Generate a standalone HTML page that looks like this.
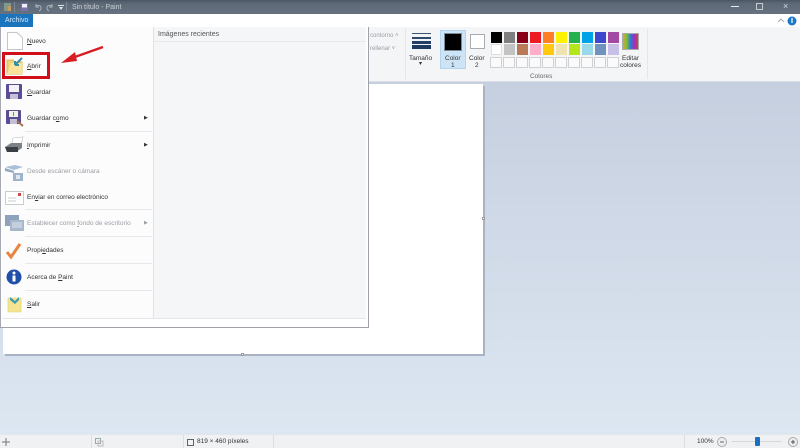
<!DOCTYPE html>
<html><head><meta charset="utf-8"><style>
html,body{margin:0;padding:0}
body{width:800px;height:448px;overflow:hidden;position:relative;background:#fff;font-family:"Liberation Sans",sans-serif;color:#333;filter:blur(.3px)}
.a{position:absolute}
.t{position:absolute;font-size:6.5px;line-height:9px;white-space:nowrap;color:#333}
.g{color:#9a9da3}
.sw{position:absolute;width:11px;height:11px;box-sizing:border-box}
.e{position:absolute;width:12px;height:11px;box-sizing:border-box;border:1px solid #cfd1d4;background:#fafafa}
.sep{position:absolute;left:25px;width:127px;height:1px;background:#e6e8ec}
svg{position:absolute;overflow:visible}
u{text-decoration:underline}
</style></head><body>
<div class="a" style="left:0;top:0;width:800px;height:14px;background:linear-gradient(#4a5563,#5d6977 25%,#66727f)"></div>
<svg style="left:4px;top:3px" width="8" height="8"><rect width="7" height="8" fill="#7f9a8c"/><rect x="4" y="3" width="3" height="5" fill="#c99a5a"/></svg>
<div class="a" style="left:14px;top:2px;width:1px;height:10px;background:#7d8894"></div>
<svg style="left:21px;top:3px" width="7" height="8"><rect width="7" height="8" fill="#7c6fb0"/><rect x="1" y="1" width="5" height="3.500" fill="#f1eff8"/></svg>
<svg style="left:34px;top:3px" width="8" height="8"><path d="M2 1V4H5M2 4C3.500 1.500 7 2 7 5C7 6.500 6 7.500 5 8" stroke="#aab3bd" fill="none"/></svg>
<svg style="left:46px;top:3px" width="8" height="8"><path d="M6 1V4H3M6 4C4.500 1.500 1 2 1 5C1 6.500 2 7.500 3 8" stroke="#aab3bd" fill="none"/></svg>
<div class="a" style="left:58px;top:5px;width:6px;height:1px;background:#e4e7ea"></div>
<svg style="left:59px;top:7px" width="4" height="3"><path d="M0 0H4L2 3Z" fill="#e4e7ea"/></svg>
<div class="a" style="left:66px;top:2px;width:1px;height:10px;background:#7d8894"></div>
<div class="t" style="left:72px;top:3px;color:#c9d0d8;font-size:7px">Sin título - Paint</div>
<div class="a" style="left:731px;top:6px;width:8px;height:1px;background:#e8ebee"></div>
<div class="a" style="left:756px;top:3px;width:7px;height:7px;border:1px solid #c4cad1;box-sizing:border-box"></div>
<div class="t" style="left:783px;top:2px;color:#d5dae0;font-size:9px">×</div>

<div class="a" style="left:0;top:14px;width:800px;height:13px;background:#fff"></div>
<div class="a" style="left:0;top:14px;width:33px;height:13px;background:#1c74bd"></div>
<div class="t" style="left:5px;top:16px;color:#d6e8f7;font-size:7px">Archivo</div>
<svg style="left:778px;top:15px" width="20" height="12"><path d="M0 7 L3 4 L6 7" stroke="#aaa" fill="none"/><circle cx="14" cy="6" r="4.500" fill="#1b78c8"/><rect x="13.400" y="3" width="1.200" height="5" fill="#fff"/></svg>

<div class="a" style="left:0;top:27px;width:800px;height:55px;background:#f4f5f7;border-bottom:1px solid #dcdfe3;box-sizing:border-box"></div>
<div class="t g" style="left:370px;top:32px;font-size:6px">contorno ˄</div>
<div class="t g" style="left:370px;top:45px;font-size:6px">rellenar ˅</div>
<div class="a" style="left:405px;top:29px;width:1px;height:50px;background:#e4e6e9"></div>
<div class="a" style="left:412px;top:33px;width:19px;height:1px;background:#3c5477"></div>
<div class="a" style="left:412px;top:37px;width:19px;height:2px;background:#2f4a70"></div>
<div class="a" style="left:412px;top:41px;width:19px;height:3px;background:#243f66"></div>
<div class="a" style="left:412px;top:45px;width:19px;height:4px;background:#1e3a60"></div>
<div class="t" style="left:409px;top:54px;font-size:6.500px">Tamaño</div>
<div class="t" style="left:419px;top:60px;font-size:6px">▾</div>
<div class="a" style="left:440px;top:30px;width:26px;height:39px;background:#cde4f7;border:1px solid #b5d3ec;box-sizing:border-box"></div>
<div class="a" style="left:444px;top:33px;width:18px;height:18px;background:#000;border:1px solid #7b8a99;box-sizing:border-box"></div>
<div class="t" style="left:445px;top:54px">Color</div><div class="t" style="left:451px;top:61px">1</div>
<div class="a" style="left:470px;top:34px;width:15px;height:15px;background:#fff;border:1px solid #a8abaf;box-sizing:border-box"></div>
<div class="t" style="left:469px;top:54px">Color</div><div class="t" style="left:475px;top:61px">2</div>

<div class="sw" style="left:491px;top:32px;background:#000"></div>
<div class="sw" style="left:504px;top:32px;background:#7f7f7f"></div>
<div class="sw" style="left:517px;top:32px;background:#880015"></div>
<div class="sw" style="left:530px;top:32px;background:#ed1c24"></div>
<div class="sw" style="left:543px;top:32px;background:#ff7f27"></div>
<div class="sw" style="left:556px;top:32px;background:#fff200"></div>
<div class="sw" style="left:569px;top:32px;background:#22b14c"></div>
<div class="sw" style="left:582px;top:32px;background:#00a2e8"></div>
<div class="sw" style="left:595px;top:32px;background:#3f48cc"></div>
<div class="sw" style="left:608px;top:32px;background:#a349a4"></div>
<div class="sw" style="left:491px;top:44px;background:#fff;border:1px solid #ddd"></div>
<div class="sw" style="left:504px;top:44px;background:#c3c3c3"></div>
<div class="sw" style="left:517px;top:44px;background:#b97a57"></div>
<div class="sw" style="left:530px;top:44px;background:#ffaec9"></div>
<div class="sw" style="left:543px;top:44px;background:#ffc90e"></div>
<div class="sw" style="left:556px;top:44px;background:#efe4b0"></div>
<div class="sw" style="left:569px;top:44px;background:#b5e61d"></div>
<div class="sw" style="left:582px;top:44px;background:#99d9ea"></div>
<div class="sw" style="left:595px;top:44px;background:#7092be"></div>
<div class="sw" style="left:608px;top:44px;background:#c8bfe7"></div>
<div class="e" style="left:490px;top:57px"></div><div class="e" style="left:503px;top:57px"></div><div class="e" style="left:516px;top:57px"></div><div class="e" style="left:529px;top:57px"></div><div class="e" style="left:542px;top:57px"></div><div class="e" style="left:555px;top:57px"></div><div class="e" style="left:568px;top:57px"></div><div class="e" style="left:581px;top:57px"></div><div class="e" style="left:594px;top:57px"></div><div class="e" style="left:607px;top:57px"></div>
<div class="t" style="left:530px;top:72px;color:#666">Colores</div>
<div class="a" style="left:622px;top:33px;width:17px;height:17px;border:1px solid #aaa;box-sizing:border-box;background:linear-gradient(90deg,#d9a53a,#7bbf3a,#2a7ad8,#a030c0,#d04040)"></div>
<div class="t" style="left:622px;top:54px">Editar</div><div class="t" style="left:620px;top:61px">colores</div>
<div class="a" style="left:647px;top:29px;width:1px;height:50px;background:#e4e6e9"></div>

<div class="a" style="left:0;top:82px;width:800px;height:352px;background:linear-gradient(#c5cfdf,#dde7f2)"></div>
<div class="a" style="left:3px;top:84px;width:480px;height:270px;background:#fff;box-shadow:2px 2px 0 #a9b3c3"></div>
<div class="a" style="left:482px;top:217px;width:3px;height:3px;background:#fff;border:1px solid #999;box-sizing:border-box"></div>
<div class="a" style="left:241px;top:353px;width:3px;height:3px;background:#fff;border:1px solid #999;box-sizing:border-box"></div>

<div class="a" style="left:0;top:27px;width:369px;height:301px;background:#fff;border:1px solid #9ea2a8;border-top:0;border-left:0;box-sizing:border-box"></div>
<div class="a" style="left:0;top:27px;width:1px;height:300px;background:#a5aab2"></div>
<div class="a" style="left:2px;top:27px;width:151px;height:291px;background:#fcfcfd"></div>
<div class="a" style="left:153px;top:27px;width:1px;height:291px;background:#dfe1e5"></div>
<div class="a" style="left:154px;top:27px;width:212px;height:291px;background:#f5f6f8"></div>
<div class="a" style="left:154px;top:41px;width:212px;height:1px;background:#e6e8eb"></div>
<div class="a" style="left:2px;top:318px;width:364px;height:1px;background:#e4e6e9"></div>
<div class="t" style="left:158px;top:30px;font-size:7px;color:#555">Imágenes recientes</div>

<svg style="left:7px;top:32px" width="16" height="18"><path d="M.5 .5H10L15.500 6V17.500H.5Z" fill="#fff" stroke="#c4c6ca"/></svg>
<div class="t" style="left:27px;top:37px"><u>N</u>uevo</div>

<svg style="left:6px;top:57px" width="18" height="18"><path d="M1 3H7L9 5H16V17H1Z" fill="#efd27c" stroke="#d8b95c"/><path d="M5 6H16V17H1Z" fill="#f8e49c"/><path d="M9 8L16 1M9 8H13M9 8V4" stroke="#2e8fa8" stroke-width="2" fill="none"/></svg>
<div class="t" style="left:27px;top:62px"><u>A</u>brir</div>

<svg style="left:6px;top:84px" width="17" height="16"><rect width="16" height="15" rx="1" fill="#5a4d94"/><rect x="3" y="1" width="10" height="7" fill="#f2f2f8"/><rect x="4" y="10" width="8" height="5" fill="#c4c0d8"/></svg>
<div class="t" style="left:27px;top:88px"><u>G</u>uardar</div>

<svg style="left:6px;top:110px" width="18" height="17"><rect width="15" height="14" rx="1" fill="#5a4d94"/><rect x="3" y="1" width="9" height="6" fill="#eef3e8"/><path d="M7.500 2V6" stroke="#5aa04a"/><rect x="4" y="9" width="7" height="5" fill="#c4c0d8"/><path d="M11 11L17 16" stroke="#b07050" stroke-width="2"/></svg>
<div class="t" style="left:27px;top:114px">Guardar c<u>o</u>mo</div>
<div class="t" style="left:144px;top:114px;font-size:5px">▶</div>
<div class="sep" style="top:131px"></div>

<svg style="left:4px;top:137px" width="20" height="16"><path d="M9 1L19 0L17 7H8Z" fill="#fff" stroke="#bbb" stroke-width=".6"/><path d="M1 10L7 6H18V11L12 15H3Z" fill="#7d8288"/><path d="M3 15L1 10H14V15Z" fill="#3b3f44"/></svg>
<div class="t" style="left:27px;top:141px"><u>I</u>mprimir</div>
<div class="t" style="left:144px;top:141px;font-size:5px">▶</div>

<svg style="left:4px;top:164px" width="20" height="17"><path d="M1 3L11 1L19 3L10 6Z" fill="#a9c0d8"/><path d="M1 4L10 7V9L1 7Z" fill="#8ea8c2"/><rect x="9" y="9" width="10" height="8" fill="#9db4cc"/><rect x="12" y="11" width="4" height="4" fill="#dfe8f0"/></svg>
<div class="t g" style="left:27px;top:167px">Desde escáner o cámara</div>

<svg style="left:5px;top:191px" width="19" height="14"><rect x=".5" y=".5" width="18" height="13" fill="#fff" stroke="#c8cbd0"/><rect x="13" y="2" width="3" height="3" fill="#d04848"/><path d="M3 7H11M3 10H11" stroke="#c9cdd4"/></svg>
<div class="t" style="left:27px;top:193px">En<u>v</u>iar en correo electrónico</div>
<div class="sep" style="top:209px"></div>

<svg style="left:5px;top:215px" width="19" height="17"><rect width="14" height="11" fill="#8fa2bc"/><rect x="5" y="5" width="14" height="11" fill="#a8b7cc"/><rect x="7" y="7" width="10" height="6" fill="#c5d0de"/></svg>
<div class="t g" style="left:27px;top:219px">Establecer como <u>f</u>ondo de escritorio</div>
<div class="t g" style="left:144px;top:219px;font-size:5px">▶</div>
<div class="sep" style="top:236px"></div>

<svg style="left:5px;top:242px" width="17" height="17"><path d="M2 10L6 15L15 2" stroke="#e8843f" stroke-width="3" fill="none"/></svg>
<div class="t" style="left:27px;top:246px">Propi<u>e</u>dades</div>
<div class="sep" style="top:263px"></div>

<svg style="left:6px;top:269px" width="16" height="16"><circle cx="8" cy="8" r="7.500" fill="#1f4fa8"/><rect x="6.500" y="6.500" width="3" height="6" fill="#fff"/><circle cx="8" cy="4" r="1.500" fill="#fff"/></svg>
<div class="t" style="left:27px;top:273px">Acerca de <u>P</u>aint</div>
<div class="sep" style="top:290px"></div>

<svg style="left:7px;top:296px" width="15" height="17"><path d="M1 2H14V16H1Z" fill="#f5e492" stroke="#e0cb70" stroke-width=".6"/><path d="M3 1L8 5L12 1V4L8 8L3 4Z" fill="#3c9cae"/></svg>
<div class="t" style="left:27px;top:300px"><u>S</u>alir</div>

<div class="a" style="left:2px;top:52px;width:48px;height:27px;border:3px solid #d10f1a;box-sizing:border-box"></div>
<svg style="left:60px;top:46px" width="45" height="20"><path d="M43 1L12 12" stroke="#d81e24" stroke-width="2.400"/><path d="M1 17L15 6L17 15Z" fill="#d81e24"/></svg>

<div class="a" style="left:0;top:434px;width:800px;height:14px;background:#f0f1f3;border-top:1px solid #e4e6e9;box-sizing:border-box"></div>
<div class="a" style="left:91px;top:435px;width:1px;height:13px;background:#dcdee1"></div>
<div class="a" style="left:183px;top:435px;width:1px;height:13px;background:#dcdee1"></div>
<div class="a" style="left:273px;top:435px;width:1px;height:13px;background:#dcdee1"></div>
<div class="a" style="left:684px;top:435px;width:1px;height:13px;background:#dcdee1"></div>
<svg style="left:2px;top:438px" width="8" height="8"><path d="M4 0V8M0 4H8" stroke="#777"/></svg>
<svg style="left:95px;top:438px" width="8" height="8"><rect x=".5" y=".5" width="5" height="5" fill="none" stroke="#9aa"/><rect x="3" y="3" width="5" height="5" fill="none" stroke="#bbb"/></svg>
<svg style="left:186px;top:438px" width="8" height="8"><rect x="1.500" y="1.500" width="6" height="6" fill="none" stroke="#567"/></svg>
<div class="t" style="left:197px;top:437px;font-size:6.500px;color:#333">819 × 460 píxeles</div>
<div class="t" style="left:697px;top:437px;font-size:6.500px;color:#333">100%</div>
<svg style="left:717px;top:437px" width="10" height="10"><circle cx="5" cy="5" r="4.500" fill="#eee" stroke="#aaa"/><path d="M3 5H7" stroke="#666"/></svg>
<div class="a" style="left:732px;top:441px;width:50px;height:1px;background:#d5d7da"></div>
<div class="a" style="left:755px;top:437px;width:5px;height:9px;background:#1b6fc0;border-radius:1px"></div>
<svg style="left:788px;top:437px" width="10" height="10"><circle cx="5" cy="5" r="4.500" fill="#eee" stroke="#aaa"/><path d="M3 5H7M5 3V7" stroke="#555"/></svg>
</body></html>
